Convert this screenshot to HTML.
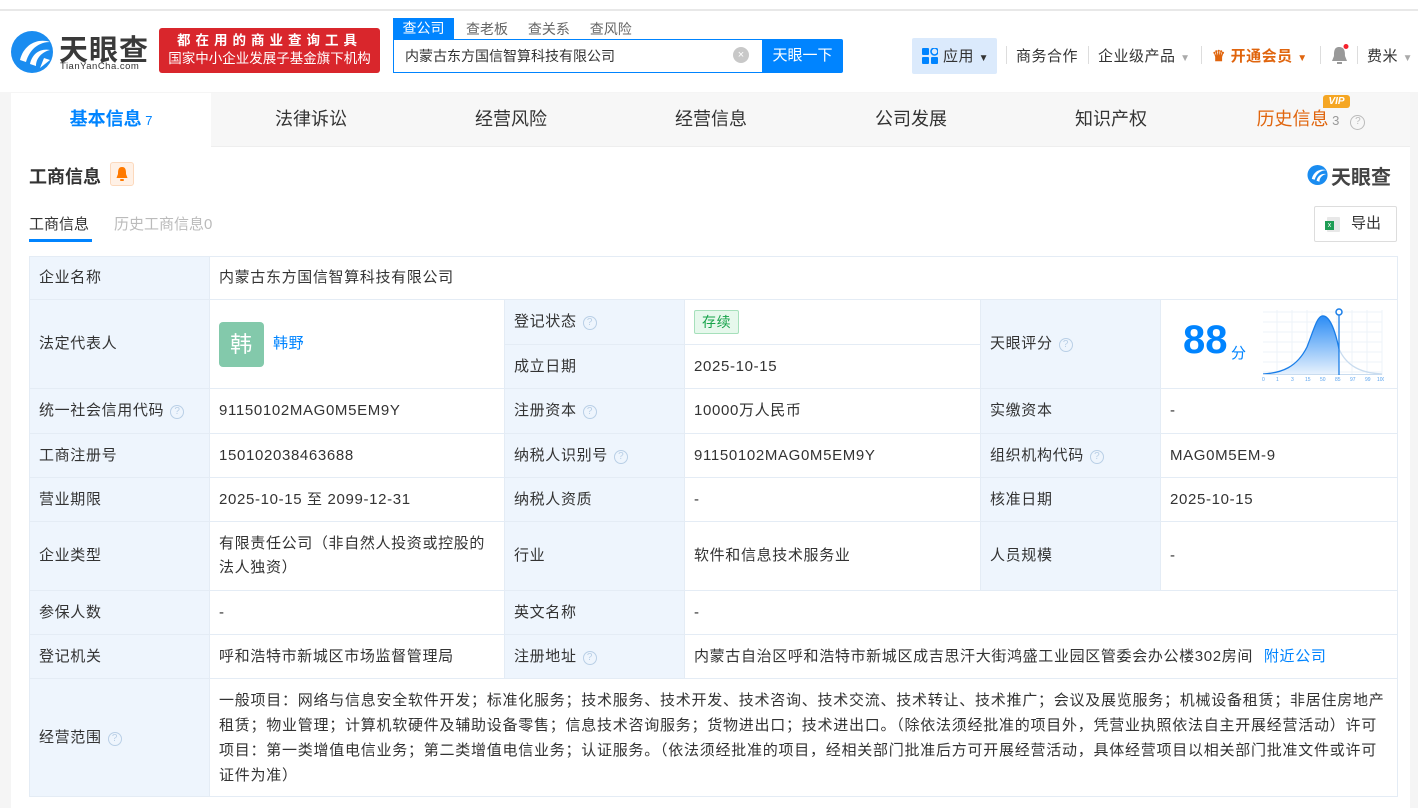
<!DOCTYPE html>
<html><head><meta charset="utf-8">
<style>
*{margin:0;padding:0;box-sizing:border-box}
body{width:1418px;height:808px;overflow:hidden;background:#f5f5f5;font-family:"Liberation Sans","Noto Sans CJK SC",sans-serif;color:#333;position:relative}
.a{position:absolute}
.hdr{left:0;top:0;width:1418px;height:92px;background:#fff;border-top:2px solid #fff}
.hdr:before{content:"";position:absolute;left:0;top:7px;width:1418px;height:2px;background:#e8e8e8}
.nav{font-size:15px;color:#333;top:45px;letter-spacing:.5px}
.sep{width:1px;height:18px;background:#ddd;top:46px}
.card{left:11px;top:93px;width:1399px;height:715px;background:#fff}
.tabs{left:11px;top:93px;width:1399px;height:54px;background:#f7f7f7;border-bottom:1px solid #eee}
.tab{top:0;width:200px;height:54px;line-height:52px;text-align:center;font-size:18px;color:#333}
table{position:absolute;left:29px;top:256px;width:1368px;border-collapse:collapse;table-layout:fixed;font-size:15px;letter-spacing:.65px}
td{border:1px solid #e4ecf5;padding:0 9px;color:#333;vertical-align:middle;line-height:24px}
td.l{background:#eef5fd}
.q{display:inline-block;width:14px;height:14px;border:1px solid #b9cfe6;border-radius:50%;font-size:10px;line-height:12px;text-align:center;color:#b9cfe6;margin-left:6px;vertical-align:1px;letter-spacing:0}
</style></head><body>
<div class="a hdr"></div>
<svg class="a" style="left:10px;top:30px" width="46" height="44" viewBox="0 0 46 44">
<circle cx="22" cy="22" r="21" fill="#1a8cf0"/>
<path d="M10 30 C14 14 28 8 40 12 C30 12 20 18 16 32Z" fill="#fff"/>
<path d="M20 34 C22 24 30 18 40 20 C32 22 26 28 26 36Z" fill="#fff"/>
<path d="M30 38 L34 28 L40 30Z" fill="#fff"/>
</svg>
<div class="a" style="left:59px;top:27px;font-size:29px;font-weight:bold;color:#3a3a3a;letter-spacing:1px">天眼查</div>
<div class="a" style="left:60px;top:61px;font-size:9.5px;color:#333;letter-spacing:.5px">TianYanCha.com</div>
<div class="a" style="left:159px;top:28px;width:221px;height:45px;background:#d9262c;border-radius:3px;color:#fff;text-align:center;font-size:13.5px;line-height:18px;padding-top:4px"><div style="letter-spacing:5px;font-weight:bold">都在用的商业查询工具</div><div>国家中小企业发展子基金旗下机构</div></div>
<div class="a" style="left:393px;top:18px;width:61px;height:21px;background:#0084ff;color:#fff;font-size:14px;text-align:center;line-height:21px">查公司</div>
<div class="a" style="left:466px;top:19px;font-size:14px;color:#666;word-spacing:16px">查老板 查关系 查风险</div>
<div class="a" style="left:393px;top:39px;width:370px;height:34px;border:1px solid #0084ff;border-right:none;background:#fff;font-size:14px;line-height:32px;padding-left:11px">内蒙古东方国信智算科技有限公司</div>
<div class="a" style="left:733px;top:47px;width:16px;height:16px;border-radius:50%;background:#c8c8c8;color:#fff;font-size:11px;text-align:center;line-height:16px">×</div>
<div class="a" style="left:762px;top:39px;width:81px;height:34px;background:#0084ff;color:#fff;font-size:15px;text-align:center;line-height:34px;border-radius:0 2px 2px 0">天眼一下</div>
<div class="a" style="left:912px;top:38px;width:85px;height:36px;background:#dbeafc;border-radius:2px"></div>
<svg class="a" style="left:922px;top:48px" width="16" height="16"><rect x="0" y="0" width="7" height="7" rx="1" fill="#0084ff"/><rect x="9" y="0" width="7" height="7" rx="3.5" fill="none" stroke="#0084ff" stroke-width="1.6"/><rect x="0" y="9" width="7" height="7" rx="1" fill="#0084ff"/><rect x="9" y="9" width="7" height="7" rx="1" fill="#0084ff"/></svg>
<div class="a nav" style="left:943px">应用 <span style="font-size:10px">▼</span></div>
<div class="a sep" style="left:1006px"></div>
<div class="a nav" style="left:1016px">商务合作</div>
<div class="a sep" style="left:1088px"></div>
<div class="a nav" style="left:1098px">企业级产品 <span style="font-size:10px;color:#aaa">▼</span></div>
<div class="a sep" style="left:1201px"></div>
<div class="a nav" style="left:1212px;color:#e0650e;font-weight:bold">♛ 开通会员 <span style="font-size:10px">▼</span></div>
<div class="a sep" style="left:1320px"></div>
<svg class="a" style="left:1330px;top:44px" width="20" height="22"><path d="M9 3 C4 3 4 8 4 12 L2 17 L17 17 L15 12 C15 8 15 3 9 3Z" fill="#999"/><rect x="7" y="18" width="5" height="2" fill="#999"/><circle cx="16" cy="2.5" r="2.5" fill="#f5222d"/></svg>
<div class="a sep" style="left:1357px"></div>
<div class="a nav" style="left:1367px">费米 <span style="font-size:10px;color:#aaa">▼</span></div>

<div class="a card"></div>
<div class="a tabs">
<div class="a tab" style="left:0;background:#fff;color:#0084ff;font-weight:bold">基本信息<span style="font-size:13px;font-weight:normal"> 7</span></div>
<div class="a tab" style="left:200px">法律诉讼</div>
<div class="a tab" style="left:400px">经营风险</div>
<div class="a tab" style="left:600px">经营信息</div>
<div class="a tab" style="left:800px">公司发展</div>
<div class="a tab" style="left:1000px">知识产权</div>
<div class="a tab" style="left:1200px;color:#e0650e">历史信息<span style="font-size:13px;color:#999"> 3</span> <span class="q" style="border-color:#bbb;color:#bbb;width:15px;height:15px">?</span></div>
<div class="a" style="left:1312px;top:2px;width:27px;height:13px;background:#f5a623;color:#fff;font-size:10px;font-style:italic;font-weight:bold;text-align:center;line-height:13px;border-radius:3px 3px 3px 0">VIP</div>
</div>

<div class="a" style="left:29px;top:163px;font-size:18px;font-weight:bold;color:#333">工商信息</div>
<div class="a" style="left:110px;top:162px;width:24px;height:24px;background:#fff1e6;border:1px solid #fcd9bd;border-radius:3px"></div>
<svg class="a" style="left:115px;top:166px" width="14" height="16"><path d="M7 1 C3 1 3 5 3 8 L1.5 12 L12.5 12 L11 8 C11 5 11 1 7 1Z" fill="#ff7a00"/><rect x="5" y="13" width="4" height="2" rx="1" fill="#ff7a00"/></svg>
<svg class="a" style="left:1307px;top:164px" width="22" height="22" viewBox="0 0 46 44"><circle cx="22" cy="22" r="21" fill="#1a8cf0"/><path d="M10 30 C14 14 28 8 40 12 C30 12 20 18 16 32Z" fill="#fff"/><path d="M20 34 C22 24 30 18 40 20 C32 22 26 28 26 36Z" fill="#fff"/></svg>
<div class="a" style="left:1331px;top:161px;font-size:20px;font-weight:bold;color:#444">天眼查</div>
<div class="a" style="left:29px;top:213px;font-size:15px;color:#333">工商信息</div>
<div class="a" style="left:29px;top:239px;width:63px;height:3px;background:#0084ff"></div>
<div class="a" style="left:114px;top:213px;font-size:15px;color:#bbb">历史工商信息0</div>
<div class="a" style="left:1314px;top:206px;width:83px;height:36px;border:1px solid #ddd;border-radius:2px;font-size:15px;line-height:34px;padding-left:36px">导出</div>
<div class="a" style="left:1327px;top:217px;width:13px;height:15px;background:#e8e8e8;border-radius:1px"></div>
<div class="a" style="left:1325px;top:221px;width:9px;height:9px;background:#1f9d55;color:#fff;font-size:7px;text-align:center;line-height:9px">x</div>

<table>
<colgroup><col style="width:180px"><col style="width:295px"><col style="width:180px"><col style="width:296px"><col style="width:180px"><col style="width:237px"></colgroup>
<tr style="height:43px"><td class="l">企业名称</td><td colspan="5">内蒙古东方国信智算科技有限公司</td></tr>
<tr style="height:45px"><td class="l" rowspan="2">法定代表人</td><td rowspan="2"><span style="display:inline-block;width:45px;height:45px;background:#83c9ab;border-radius:4px;color:#fff;font-size:22px;text-align:center;line-height:45px;vertical-align:middle">韩</span><span style="color:#0084ff;margin-left:9px">韩野</span></td><td class="l">登记状态<span class="q">?</span></td><td><span style="display:inline-block;border:1px solid #a6e0bb;background:#e6f8ec;color:#17a34a;font-size:14px;line-height:22px;padding:0 7px;border-radius:2px">存续</span></td><td class="l" rowspan="2">天眼评分<span class="q">?</span></td><td rowspan="2" style="position:relative"></td></tr>
<tr style="height:44px"><td class="l">成立日期</td><td>2025-10-15</td></tr>
<tr style="height:45px"><td class="l">统一社会信用代码<span class="q">?</span></td><td>91150102MAG0M5EM9Y</td><td class="l">注册资本<span class="q">?</span></td><td>10000万人民币</td><td class="l">实缴资本</td><td>-</td></tr>
<tr style="height:44px"><td class="l">工商注册号</td><td>150102038463688</td><td class="l">纳税人识别号<span class="q">?</span></td><td>91150102MAG0M5EM9Y</td><td class="l">组织机构代码<span class="q">?</span></td><td>MAG0M5EM-9</td></tr>
<tr style="height:44px"><td class="l">营业期限</td><td>2025-10-15 至 2099-12-31</td><td class="l">纳税人资质</td><td>-</td><td class="l">核准日期</td><td>2025-10-15</td></tr>
<tr style="height:69px"><td class="l">企业类型</td><td>有限责任公司（非自然人投资或控股的法人独资）</td><td class="l">行业</td><td>软件和信息技术服务业</td><td class="l">人员规模</td><td>-</td></tr>
<tr style="height:44px"><td class="l">参保人数</td><td>-</td><td class="l">英文名称</td><td colspan="3">-</td></tr>
<tr style="height:44px"><td class="l">登记机关</td><td>呼和浩特市新城区市场监督管理局</td><td class="l">注册地址<span class="q">?</span></td><td colspan="3">内蒙古自治区呼和浩特市新城区成吉思汗大街鸿盛工业园区管委会办公楼302房间 <span style="color:#0084ff;margin-left:6px">附近公司</span></td></tr>
<tr style="height:118px"><td class="l">经营范围<span class="q">?</span></td><td colspan="5" style="line-height:25px;letter-spacing:.75px">一般项目：网络与信息安全软件开发；标准化服务；技术服务、技术开发、技术咨询、技术交流、技术转让、技术推广；会议及展览服务；机械设备租赁；非居住房地产租赁；物业管理；计算机软硬件及辅助设备零售；信息技术咨询服务；货物进出口；技术进出口。（除依法须经批准的项目外，凭营业执照依法自主开展经营活动）许可项目：第一类增值电信业务；第二类增值电信业务；认证服务。（依法须经批准的项目，经相关部门批准后方可开展经营活动，具体经营项目以相关部门批准文件或许可证件为准）</td></tr>
</table>

<div class="a" style="left:1183px;top:318px;font-size:40px;font-weight:bold;color:#0084ff">88</div>
<div class="a" style="left:1231px;top:342px;font-size:15px;color:#0084ff">分</div>
<svg class="a" style="left:1262px;top:307px" width="122" height="76" viewBox="0 0 122 76">
<defs><linearGradient id="g" x1="0" y1="0" x2="0" y2="1"><stop offset="0" stop-color="#2b8cf5"/><stop offset="1" stop-color="#e6f1fd"/></linearGradient></defs>
<g stroke="#eef3f9" stroke-width="1"><path d="M1 5H120M1 15H120M1 25H120M1 35H120M1 45H120M1 55H120M1 65H120"/><path d="M15 3V68M30 3V68M45 3V68M60 3V68M75 3V68M90 3V68M105 3V68M120 3V68"/></g>
<path d="M1 67 C20 66 35 60 45 40 C52 22 55 10 60 9 C66 8 72 18 77 42 L77 67Z" fill="url(#g)"/>
<path d="M1 67 C20 66 35 60 45 40 C52 22 55 10 60 9 C66 8 72 18 77 42" fill="none" stroke="#1a7ee8" stroke-width="1.3"/>
<path d="M77 42 C85 60 100 66 120 67" fill="none" stroke="#c9dcef" stroke-width="1.3"/>
<path d="M1 67.5H120" stroke="#c9dcef"/>
<path d="M77 6V68" stroke="#1a7ee8" stroke-width="1.3"/>
<circle cx="77" cy="5" r="3" fill="#fff" stroke="#1a7ee8" stroke-width="1.5"/>
<g font-size="5" fill="#5aa3ee" font-family="Liberation Sans"><text x="0" y="74">0</text><text x="14" y="74">1</text><text x="29" y="74">3</text><text x="43" y="74">15</text><text x="58" y="74">50</text><text x="73" y="74">85</text><text x="88" y="74">97</text><text x="103" y="74">99</text><text x="115" y="74">100</text></g>
</svg>
</body></html>
